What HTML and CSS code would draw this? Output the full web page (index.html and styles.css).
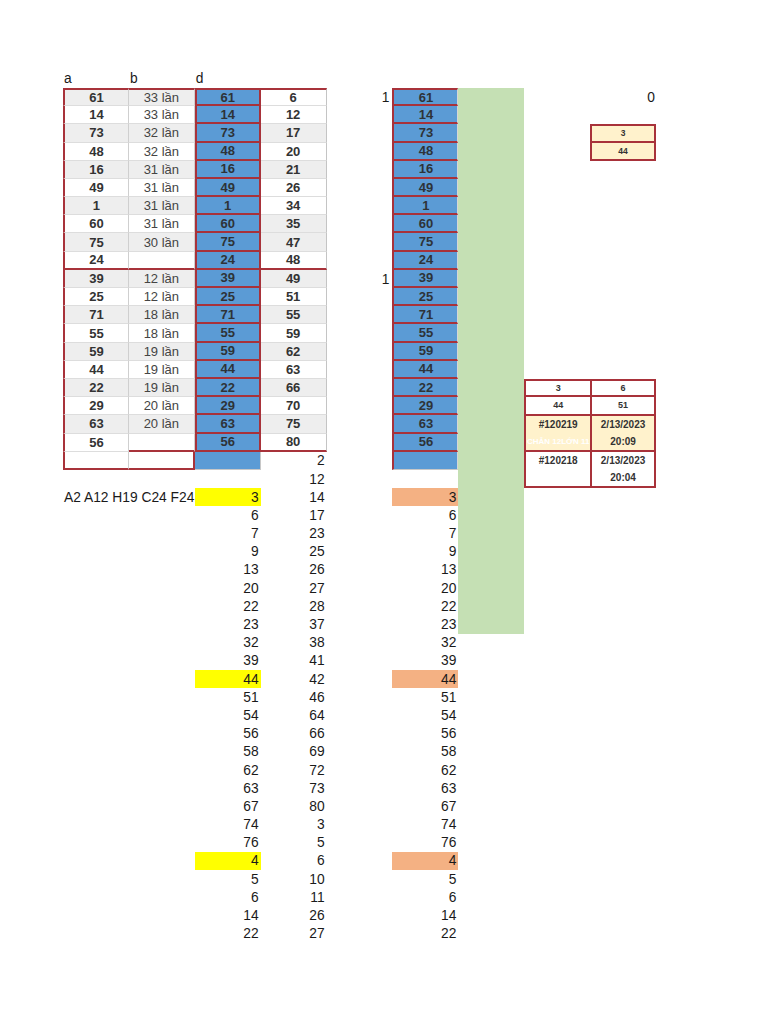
FILE: index.html
```html
<!DOCTYPE html>
<html>
<head>
<meta charset="utf-8">
<title>Sheet</title>
<link rel="stylesheet" href="styles.css">
</head>
<body>
<div class="sheet">
  <div class="col colA">
    <div class="c hd">a</div>
    <div class="c t g top">61</div>
    <div class="c t">14</div>
    <div class="c t g">73</div>
    <div class="c t">48</div>
    <div class="c t g">16</div>
    <div class="c t">49</div>
    <div class="c t g">1</div>
    <div class="c t">60</div>
    <div class="c t g">75</div>
    <div class="c t rb">24</div>
    <div class="c t g">39</div>
    <div class="c t">25</div>
    <div class="c t g">71</div>
    <div class="c t">55</div>
    <div class="c t g">59</div>
    <div class="c t">44</div>
    <div class="c t g">22</div>
    <div class="c t">29</div>
    <div class="c t g">63</div>
    <div class="c t">56</div>
    <div class="c t rb"></div>
    <div class="c"></div>
    <div class="c lbl">A2 A12 H19 C24 F24</div>
  </div>

  <div class="col colB">
    <div class="c hd">b</div>
    <div class="c t g top">33 lần</div>
    <div class="c t">33 lần</div>
    <div class="c t g">32 lần</div>
    <div class="c t">32 lần</div>
    <div class="c t g">31 lần</div>
    <div class="c t">31 lần</div>
    <div class="c t g">31 lần</div>
    <div class="c t">31 lần</div>
    <div class="c t g">30 lần</div>
    <div class="c t rb"></div>
    <div class="c t g">12 lần</div>
    <div class="c t">12 lần</div>
    <div class="c t g">18 lần</div>
    <div class="c t">18 lần</div>
    <div class="c t g">19 lần</div>
    <div class="c t">19 lần</div>
    <div class="c t g">19 lần</div>
    <div class="c t">20 lần</div>
    <div class="c t g">20 lần</div>
    <div class="c t rb"></div>
    <div class="c t rb rr"></div>
  </div>

  <div class="col colC">
    <div class="c hd">d</div>
    <div class="c blue first">61</div>
    <div class="c blue">14</div>
    <div class="c blue">73</div>
    <div class="c blue">48</div>
    <div class="c blue">16</div>
    <div class="c blue">49</div>
    <div class="c blue">1</div>
    <div class="c blue">60</div>
    <div class="c blue">75</div>
    <div class="c blue">24</div>
    <div class="c blue">39</div>
    <div class="c blue">25</div>
    <div class="c blue">71</div>
    <div class="c blue">55</div>
    <div class="c blue">59</div>
    <div class="c blue">44</div>
    <div class="c blue">22</div>
    <div class="c blue">29</div>
    <div class="c blue">63</div>
    <div class="c blue">56</div>
    <div class="c blue plain"></div>
    <div class="c"></div>
    <div class="c n yel">3</div>
    <div class="c n">6</div>
    <div class="c n">7</div>
    <div class="c n">9</div>
    <div class="c n">13</div>
    <div class="c n">20</div>
    <div class="c n">22</div>
    <div class="c n">23</div>
    <div class="c n">32</div>
    <div class="c n">39</div>
    <div class="c n yel">44</div>
    <div class="c n">51</div>
    <div class="c n">54</div>
    <div class="c n">56</div>
    <div class="c n">58</div>
    <div class="c n">62</div>
    <div class="c n">63</div>
    <div class="c n">67</div>
    <div class="c n">74</div>
    <div class="c n">76</div>
    <div class="c n yel">4</div>
    <div class="c n">5</div>
    <div class="c n">6</div>
    <div class="c n">14</div>
    <div class="c n">22</div>
  </div>

  <div class="col colD">
    <div class="c hd"></div>
    <div class="c t top">6</div>
    <div class="c t">12</div>
    <div class="c t g">17</div>
    <div class="c t">20</div>
    <div class="c t g">21</div>
    <div class="c t">26</div>
    <div class="c t">34</div>
    <div class="c t g">35</div>
    <div class="c t g">47</div>
    <div class="c t rb">48</div>
    <div class="c t g">49</div>
    <div class="c t">51</div>
    <div class="c t g">55</div>
    <div class="c t">59</div>
    <div class="c t g">62</div>
    <div class="c t">63</div>
    <div class="c t g">66</div>
    <div class="c t">70</div>
    <div class="c t g">75</div>
    <div class="c t rb">80</div>
    <div class="c n">2</div>
    <div class="c n">12</div>
    <div class="c n">14</div>
    <div class="c n">17</div>
    <div class="c n">23</div>
    <div class="c n">25</div>
    <div class="c n">26</div>
    <div class="c n">27</div>
    <div class="c n">28</div>
    <div class="c n">37</div>
    <div class="c n">38</div>
    <div class="c n">41</div>
    <div class="c n">42</div>
    <div class="c n">46</div>
    <div class="c n">64</div>
    <div class="c n">66</div>
    <div class="c n">69</div>
    <div class="c n">72</div>
    <div class="c n">73</div>
    <div class="c n">80</div>
    <div class="c n">3</div>
    <div class="c n">5</div>
    <div class="c n">6</div>
    <div class="c n">10</div>
    <div class="c n">11</div>
    <div class="c n">26</div>
    <div class="c n">27</div>
  </div>

  <div class="col colE">
    <div class="c hd"></div>
    <div class="c n e">1</div>
    <div class="sp sp9"></div>
    <div class="c n e">1</div>
  </div>

  <div class="col colF">
    <div class="c hd"></div>
    <div class="c blue fb first">61</div>
    <div class="c blue fb">14</div>
    <div class="c blue fb">73</div>
    <div class="c blue fb">48</div>
    <div class="c blue fb">16</div>
    <div class="c blue fb">49</div>
    <div class="c blue fb">1</div>
    <div class="c blue fb">60</div>
    <div class="c blue fb">75</div>
    <div class="c blue fb">24</div>
    <div class="c blue fb">39</div>
    <div class="c blue fb">25</div>
    <div class="c blue fb">71</div>
    <div class="c blue fb">55</div>
    <div class="c blue fb">59</div>
    <div class="c blue fb">44</div>
    <div class="c blue fb">22</div>
    <div class="c blue fb">29</div>
    <div class="c blue fb">63</div>
    <div class="c blue fb">56</div>
    <div class="c blue fb flast"></div>
    <div class="c"></div>
    <div class="c n org">3</div>
    <div class="c n">6</div>
    <div class="c n">7</div>
    <div class="c n">9</div>
    <div class="c n">13</div>
    <div class="c n">20</div>
    <div class="c n">22</div>
    <div class="c n">23</div>
    <div class="c n">32</div>
    <div class="c n">39</div>
    <div class="c n org">44</div>
    <div class="c n">51</div>
    <div class="c n">54</div>
    <div class="c n">56</div>
    <div class="c n">58</div>
    <div class="c n">62</div>
    <div class="c n">63</div>
    <div class="c n">67</div>
    <div class="c n">74</div>
    <div class="c n">76</div>
    <div class="c n org">4</div>
    <div class="c n">5</div>
    <div class="c n">6</div>
    <div class="c n">14</div>
    <div class="c n">22</div>
  </div>

  <div class="col colG">
    <div class="c hd"></div>
    <div class="green"></div>
  </div>

  <div class="col colH">
    <div class="c hd"></div>
    <div class="sp sp16"></div>
    <div class="c bx h first sm">3</div>
    <div class="c bx h sm">44</div>
    <div class="c bx h dbl yl"><span class="ln">#120219</span><span class="ln hid">CHẴN 12LỚN 11</span></div>
    <div class="c bx h dbl"><span class="ln">#120218</span><span class="ln"></span></div>
  </div>

  <div class="col colI">
    <div class="c hd"></div>
    <div class="c n zero">0</div>
    <div class="c"></div>
    <div class="c bx i first yl xs">3</div>
    <div class="c bx i yl xs">44</div>
    <div class="sp sp12"></div>
    <div class="c bx i first sm">6</div>
    <div class="c bx i sm">51</div>
    <div class="c bx i dbl yl"><span class="ln">2/13/2023</span><span class="ln">20:09</span></div>
    <div class="c bx i dbl"><span class="ln">2/13/2023</span><span class="ln">20:04</span></div>
  </div>
</div>
</body>
</html>
```

FILE: styles.css
```css
html, body {
  margin: 0;
  padding: 0;
  background: #ffffff;
}

body {
  font-family: "Liberation Sans", Arial, sans-serif;
  color: #1a1a1a;
}

.sheet {
  display: flex;
  padding: 69.8px 0 40px 63px;
}

.col {
  display: flex;
  flex-direction: column;
  width: 65.9px;
  flex: none;
}

.c {
  height: 18.2px;
  box-sizing: border-box;
  display: flex;
  align-items: center;
  white-space: nowrap;
  font-size: 13.8px;
}

.hd {
  padding-left: 1px;
  color: #1a1a1a;
}

/* table cells */
.t {
  justify-content: center;
  font-size: 13px;
  font-weight: bold;
  color: #333333;
  background: #ffffff;
  border-right: 1px solid #cfcfcf;
  border-bottom: 1px solid #dddddd;
}

.colB .t {
  font-weight: normal;
  color: #444444;
}

.colA .t {
  border-left: 2px solid #a8323a;
}

.t.g {
  background: #eeeeee;
}

.t.top {
  border-top: 2px solid #a8323a;
}

.t.rb {
  border-bottom: 2px solid #a8323a;
}

.t.rr {
  border-right: 2px solid #a8323a;
}

.colD .t {
  border-right: 1px solid #c4c4c4;
}

/* blue cells */
.blue {
  justify-content: center;
  background: #5b9bd5;
  font-size: 13px;
  font-weight: bold;
  color: #2e3338;
  border-left: 2px solid #a8323a;
  border-right: 2px solid #a8323a;
  border-bottom: 2px solid #a8323a;
}

.blue.first {
  border-top: 2px solid #a8323a;
}

.blue.plain {
  border-left: 0;
  border-right: 1px solid #c8c8c8;
  border-bottom: 1px solid #c8c8c8;
}

.blue.fb {
  border-right: 1px solid #d6d6d6;
}

.blue.flast {
  border-bottom: 1px solid #c8c8c8;
}

/* plain numbers */
.n {
  justify-content: flex-end;
  padding-right: 2px;
  color: #1a1a1a;
}

.n.e {
  padding-right: 3px;
}

.n.zero {
  padding-right: 1px;
}

.yel {
  background: #ffff00;
}

.org {
  background: #f4b183;
}

.lbl {
  overflow: visible;
  padding-left: 1px;
  color: #1a1a1a;
}

.sp9 {
  height: 163.8px;
}

.sp16 {
  height: 291.2px;
}

.sp12 {
  height: 218.4px;
}

.green {
  height: 546px;
  background: #c5e0b4;
}

/* small boxes */
.bx {
  justify-content: center;
  font-weight: bold;
  font-size: 10px;
  color: #333333;
  background: #ffffff;
  border-left: 2px solid #a8323a;
  border-bottom: 2px solid #a8323a;
}

.bx.i {
  border-right: 2px solid #a8323a;
}

.bx.first {
  border-top: 2px solid #a8323a;
}

.bx.sm {
  font-size: 9px;
}

.bx.xs {
  font-size: 8.5px;
}

.bx.yl {
  background: #fff2cc;
}

.bx.dbl {
  height: 36.4px;
  flex-direction: column;
  justify-content: flex-start;
}

.ln {
  height: 17.6px;
  display: flex;
  align-items: center;
}

.hid {
  color: #ffffff;
  font-size: 8px;
}
```
